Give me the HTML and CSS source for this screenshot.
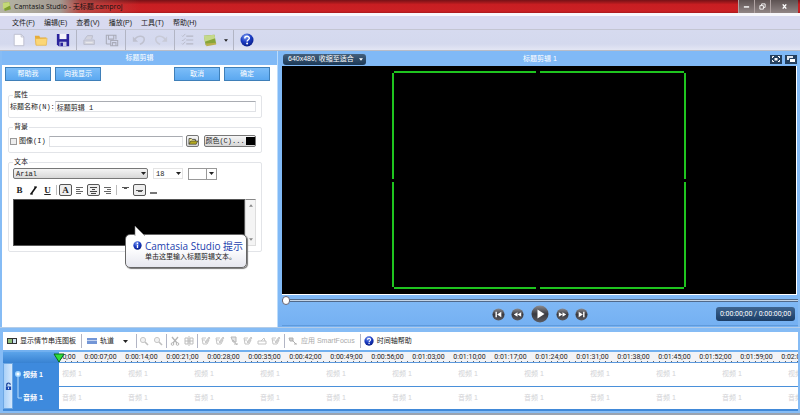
FILE: index.html
```
<!DOCTYPE html>
<html lang="zh-CN">

<head>
    <meta charset="UTF-8">
    <title>Camtasia Studio - 无标题.camproj</title>
    <link rel="stylesheet" href="styles.css">
</head>

<body>
    <svg class="sprite" aria-hidden="true">
        <defs>
            <radialGradient id="blue-ball" cx="40%" cy="25%" r="80%">
                <stop offset="0" stop-color="#7d9cf0" />
                <stop offset="0.5" stop-color="#1b3cc4" />
                <stop offset="1" stop-color="#061a80" />
            </radialGradient>
            <linearGradient id="dark-ball" x1="0" y1="0" x2="0" y2="1">
                <stop offset="0" stop-color="#8c8c90" />
                <stop offset="0.5" stop-color="#3a3a40" />
                <stop offset="1" stop-color="#5c5c62" />
            </linearGradient>
        </defs>
        <symbol id="help" viewBox="0 0 14 14">
            <circle cx="7" cy="7" r="6.5" fill="url(#blue-ball)" />
            <path d="M4.8 5.4C4.8 2.6 9.3 2.7 9.3 5.2C9.3 6.8 7.1 6.7 7.1 8.6" fill="none" stroke="#fff" stroke-width="1.5" />
            <circle cx="7.1" cy="10.6" r="1" fill="#fff" />
        </symbol>
        <symbol id="pen" viewBox="0 0 10 10">
            <path d="M1 2h4M1 4h3M1 2l1 6h4l2-4" fill="none" stroke="#c4c4c4" />
            <path d="M4 6l4-5 1 1-4 5z" fill="#d4d4d4" stroke="#b4b4b4" stroke-width=".6" />
        </symbol>
        <symbol id="magnify" viewBox="0 0 10 10">
            <circle cx="4" cy="4" r="2.6" fill="#f2f2f2" stroke="#c8c8c8" />
            <path d="M6 6l3 3" stroke="#c0c0c0" stroke-width="1.6" />
        </symbol>
        <symbol id="arrow" viewBox="0 0 5 3">
            <path d="M0 0h5L2.500 3z" fill="currentColor" />
        </symbol>
    </svg>

    <header class="title-bar">
        <svg class="app-icon" viewBox="0 0 10 10"><path d="M1 1l7-1 2 8-7 2z" fill="#7fa02e" /><path d="M1 1l7-1 1 4-8 4z" fill="#c3d877" /></svg>
        <span class="title">Camtasia Studio - 无标题.camproj</span>
        <div class="window-buttons">
            <button aria-label="最小化"><svg viewBox="0 0 8 8"><path d="M1 4.500h6" stroke="#fff" stroke-width="1.600" /></svg></button>
            <button aria-label="还原"><svg viewBox="0 0 8 8"><path d="M1 3h4v4H1zM3 3V1h4v4H5" fill="none" stroke="#fff" /></svg></button>
            <button class="close" aria-label="关闭"><svg viewBox="0 0 8 8"><path d="M2 1.500l4 5M6 1.500l-4 5" stroke="#fff" stroke-width="1.600" /></svg></button>
        </div>
    </header>

    <nav class="menu">
        <button>文件(F)</button>
        <button>编辑(E)</button>
        <button>查看(V)</button>
        <button>播放(P)</button>
        <button>工具(T)</button>
        <button>帮助(H)</button>
    </nav>

    <div class="toolbar">
        <button aria-label="新建"><svg viewBox="0 0 16 16"><path d="M2.500 1.500h8l3 3v10h-11z" fill="#fdfdff" stroke="#b9bccb" /><path d="M10.500 1.500v3h3" fill="none" stroke="#b9bccb" /></svg></button>
        <button aria-label="打开"><svg viewBox="0 0 16 16"><path d="M1 3h5l1 2h7v9H2z" fill="#e6ac3a" /><path d="M1.500 6.500L15 6l-1 8H2.500z" fill="#fbd677" stroke="#e4b044" stroke-width=".6" /></svg></button>
        <button aria-label="保存"><svg viewBox="0 0 16 16"><path d="M1 1h14v14H3l-2-2z" fill="#2a239c" /><path d="M4 1h8v6H4z" fill="#f4f4fb" /><path d="M4 10h8v5H4z" fill="#c9cce8" /><path d="M5 11h3v4H5z" fill="#2a239c" /></svg></button>
        <span class="sep"></span>
        <button disabled aria-label="导入"><svg viewBox="0 0 16 16"><path d="M2 7l3-4h6l-1 4M1 8h12v5H1z" fill="#d3d4df" stroke="#b7b9c8" /><path d="M3 11h8" stroke="#eee" /></svg></button>
        <button disabled aria-label="生成"><svg viewBox="0 0 16 16"><path d="M1.500 12.500v-10h11v5M4 3v4h6V3M1.500 12.500H6M6.500 8.500h8v6h-8zM8.500 14v-3h4v3" fill="none" stroke="#a9abb8" stroke-width="1.200" /></svg></button>
        <span class="sep"></span>
        <button disabled aria-label="撤消"><svg viewBox="0 0 16 16"><path d="M3 8c2-5 11-6 11-1 0 3-3 5-5 6" fill="none" stroke="#bfc1cf" stroke-width="1.800" /><path d="M1 4v6h6z" fill="#bfc1cf" /></svg></button>
        <button disabled aria-label="重做"><svg viewBox="0 0 16 16"><path d="M13 8C11 3 2 2 2 7c0 3 3 5 5 6" fill="none" stroke="#c8cad7" stroke-width="1.800" /><path d="M15 4v6H9z" fill="#c8cad7" /></svg></button>
        <span class="sep"></span>
        <button disabled aria-label="任务列表"><svg viewBox="0 0 16 16"><path d="M6 3.500h8M6 8h8M6 12.500h8" stroke="#b5b7c5" stroke-width="1.300" /><path d="M1 3l1 1 3-3M1 8l1 1 3-3M1 12l1 1 3-3" fill="none" stroke="#b5b7c5" /></svg></button>
        <button aria-label="启动工具"><svg viewBox="0 0 16 16"><path d="M1 3l12-1 2 10-12 2z" fill="#86a53a" /><path d="M1 3l12-1 1 4L2 10z" fill="#c5d98a" /><path d="M3 12l12-1v2L4 15z" fill="#b9b04e" /></svg></button>
        <button class="drop" aria-label="更多"><svg><use href="#arrow" /></svg></button>
        <span class="sep"></span>
        <button aria-label="帮助"><svg><use href="#help" /></svg></button>
    </div>

    <main class="workspace">
        <section class="editor">
            <h2 class="bar">标题剪辑</h2>
            <form class="clip-form">
                <div class="actions">
                    <button type="button">帮助我</button>
                    <button type="button">向我显示</button>
                    <button type="button" class="push">取消</button>
                    <button type="button">确定</button>
                </div>
                <fieldset>
                    <legend>属性</legend>
                    <div class="row">
                        <label for="clip-name">标题名称(N):</label>
                        <input class="field" id="clip-name" type="text" value="标题剪辑 1">
                    </div>
                </fieldset>
                <fieldset>
                    <legend>背景</legend>
                    <div class="row background-row">
                        <label class="check"><input type="checkbox">图像(I)</label>
                        <input class="field" type="text" aria-label="图像路径">
                        <button type="button" class="win-button browse" aria-label="浏览"><svg viewBox="0 0 12 10"><path d="M1 9V2h3l1 1h4v2" fill="#fbf39a" stroke="#333" /><path d="M1 9l2-4h9l-2 4z" fill="#b5aa1e" stroke="#333" stroke-width=".8" /></svg></button>
                        <button type="button" class="win-button color">颜色(C)...<span class="swatch"></span></button>
                    </div>
                </fieldset>
                <fieldset>
                    <legend>文本</legend>
                    <div class="row font-row">
                        <span class="picker font-name"><select aria-label="字体"><option>Arial</option></select><svg><use href="#arrow" /></svg></span>
                        <span class="picker font-size"><select aria-label="字号"><option>18</option></select><svg><use href="#arrow" /></svg></span>
                        <button type="button" class="text-color" aria-label="文本颜色"><span></span><svg><use href="#arrow" /></svg></button>
                    </div>
                    <div class="row format-row">
                        <button type="button"><b>B</b></button>
                        <button type="button" aria-label="斜体"><svg viewBox="0 0 9 9"><path d="M7 1L2 8" stroke="#111" stroke-width="1.600" /><path d="M5 1h3M1 8h3" stroke="#111" /></svg></button>
                        <button type="button"><u>U</u></button>
                        <span class="thin-sep"></span>
                        <button type="button" class="on"><b>A</b></button>
                        <button type="button" aria-label="左对齐"><svg viewBox="0 0 9 9"><path d="M1 1.500h7M1 3.500h4M1 5.500h7M1 7.500h5" stroke="#666" /></svg></button>
                        <button type="button" class="on" aria-label="居中"><svg viewBox="0 0 9 9"><path d="M1 1.500h7M3 3.500h3M1 5.500h7M2 7.500h5" stroke="#444" /></svg></button>
                        <button type="button" aria-label="右对齐"><svg viewBox="0 0 9 9"><path d="M1 1.500h7M4 3.500h4M1 5.500h7M3 7.500h5" stroke="#666" /></svg></button>
                        <span class="thin-sep"></span>
                        <button type="button" aria-label="顶部"><svg viewBox="0 0 9 9"><path d="M1 1.500h7M3 2.500h3" stroke="#555" /></svg></button>
                        <button type="button" class="on" aria-label="中部"><svg viewBox="0 0 9 9"><path d="M1 4.500h7M3 5.500h4" stroke="#555" /></svg></button>
                        <button type="button" aria-label="底部"><svg viewBox="0 0 9 9"><path d="M1 7h7" stroke="#777" stroke-width="2" /></svg></button>
                    </div>
                    <div class="text-box">
                        <textarea aria-label="标题文本"></textarea>
                        <div class="scroll"><svg class="up"><use href="#arrow" /></svg><svg><use href="#arrow" /></svg></div>
                        <div class="tip" role="tooltip">
                            <svg class="tip-arrow" viewBox="0 0 12 11"><path d="M1 11V1l10 10" fill="#fff" stroke="#777" stroke-width=".6" /></svg>
                            <svg class="info" viewBox="0 0 10 10"><circle cx="5" cy="5" r="4.600" fill="url(#blue-ball)" /><path d="M5 4.200v3.600M5 1.800v1.400" stroke="#fff" stroke-width="1.500" /></svg>
                            <div>
                                <strong>Camtasia Studio 提示</strong>
                                <p>单击这里输入标题剪辑文本。</p>
                            </div>
                        </div>
                    </div>
                </fieldset>
            </form>
        </section>

        <section class="preview">
            <div class="preview-bar">
                <button class="zoom">640x480, 收缩至适合<svg><use href="#arrow" /></svg></button>
                <h2>标题剪辑 1</h2>
                <div class="view-buttons">
                    <button aria-label="全屏"><svg viewBox="0 0 12 8"><path d="M4.500 3h3v2.500h-3z" fill="#fff" /><path d="M2.500 3V1.500H4M9.500 3V1.500H8M2.500 5v1.500H4M9.500 5v1.500H8" fill="none" stroke="#fff" /></svg></button>
                    <button aria-label="分离"><svg viewBox="0 0 12 8"><path d="M2 1h6v4H2z" fill="#dfe6ee" /><path d="M4.500 3.500h6v4h-6z" fill="#fff" stroke="#24405f" /></svg></button>
                </div>
            </div>
            <div class="screen">
                <svg viewBox="0 0 296 220" fill="none" stroke="#1fc41f" stroke-width="2">
                    <path d="M3 2h142M149 2h144M3 218h142M149 218h144M2 3v106M2 112v105M294 3v106M294 112v105" />
                </svg>
            </div>
            <input class="seek" type="range" min="0" max="100" value="0" aria-label="播放位置">
            <div class="player">
                <div class="play-buttons">
                    <button aria-label="开头"><svg viewBox="0 0 14 14"><circle cx="7" cy="7" r="6.500" fill="url(#dark-ball)" /><path d="M10 4v6L5.500 7z" fill="#fff" /><path d="M4.500 4v6" stroke="#fff" stroke-width="1.500" /></svg></button>
                    <button aria-label="后退"><svg viewBox="0 0 14 14"><circle cx="7" cy="7" r="6.500" fill="url(#dark-ball)" /><path d="M7 4.500v5L3 7zM11 4.500v5L7 7z" fill="#fff" /></svg></button>
                    <button class="play" aria-label="播放"><svg viewBox="0 0 18 18"><circle cx="9" cy="9" r="8.500" fill="url(#dark-ball)" /><path d="M6.500 4.500v9l7-4.500z" fill="#fff" /></svg></button>
                    <button aria-label="前进"><svg viewBox="0 0 14 14"><circle cx="7" cy="7" r="6.500" fill="url(#dark-ball)" /><path d="M3 4.500v5L7 7zM7 4.500v5L11 7z" fill="#fff" /></svg></button>
                    <button aria-label="结尾"><svg viewBox="0 0 14 14"><circle cx="7" cy="7" r="6.500" fill="url(#dark-ball)" /><path d="M4 4v6L8.500 7z" fill="#fff" /><path d="M9.500 4v6" stroke="#fff" stroke-width="1.500" /></svg></button>
                </div>
                <output class="time">0:00:00;00 / 0:00:00;00</output>
            </div>
        </section>
    </main>

    <section class="timeline">
        <div class="timeline-bar">
            <button><svg viewBox="0 0 10 8"><path d="M0 1h10v6H0z" fill="#333" /><path d="M1 2h4v4H1z" fill="#8fbf7a" /><path d="M6 2h3v4H6z" fill="#cfe3f5" /></svg>显示情节串连图板</button>
            <span class="sep"></span>
            <button class="tracks"><svg viewBox="0 0 10 8"><path d="M0 1h10v2H0zM0 4h10v3H0z" fill="#7396d6" /><path d="M0 3.500h10" stroke="#c3d3f0" /></svg>轨道<svg class="caret"><use href="#arrow" /></svg></button>
            <span class="sep before-tools"></span>
            <button class="tool" disabled aria-label="放大"><svg><use href="#magnify" /></svg></button>
            <button class="tool" disabled aria-label="缩小"><svg><use href="#magnify" /></svg></button>
            <span class="sep"></span>
            <button class="tool" disabled aria-label="剪切"><svg viewBox="0 0 10 10"><path d="M2 1l5 6M8 1L3 7" stroke="#b4b4b4" stroke-width="1.300" /><circle cx="2.500" cy="8" r="1.300" fill="none" stroke="#b4b4b4" /><circle cx="7.500" cy="8" r="1.300" fill="none" stroke="#b4b4b4" /></svg></button>
            <button class="tool" disabled aria-label="分割"><svg viewBox="0 0 10 10"><path d="M1 2h3v6H1zM6 2h3v6H6zM5 0v10M1 5h8" fill="none" stroke="#bcbcbc" /></svg></button>
            <span class="sep"></span>
            <button class="tool" disabled aria-label="标题剪辑"><svg><use href="#pen" /></svg></button>
            <button class="tool" disabled aria-label="缩放"><svg><use href="#pen" /></svg></button>
            <button class="tool" disabled aria-label="标注"><svg viewBox="0 0 10 10"><path d="M2 1h5v5H4zM4 4l4 5M5 8h4" fill="#e4e4e4" stroke="#b8b8b8" /></svg></button>
            <button class="tool" disabled aria-label="转场"><svg><use href="#pen" /></svg></button>
            <button class="tool" disabled aria-label="音频"><svg viewBox="0 0 10 10"><path d="M1 5h8v3H1zM4 5l3-3 1 3" fill="none" stroke="#c4c4c4" /></svg></button>
            <button class="tool" disabled aria-label="画中画"><svg><use href="#pen" /></svg></button>
            <span class="sep"></span>
            <button class="smart" disabled><svg viewBox="0 0 10 10"><path d="M1 2h4v3H2zM4 4l4 4M6 8h3" fill="#ccc" stroke="#b0b0b0" /></svg>应用 SmartFocus</button>
            <span class="sep after-smart"></span>
            <button><svg><use href="#help" /></svg>时间轴帮助</button>
        </div>
        <div class="ruler">
            <div class="ruler-head">
                <svg class="playhead" viewBox="0 0 12 10"><path d="M1 1h10L6 9z" fill="#2fe03a" stroke="#0a6a1c" /></svg>
            </div>
            <div class="ruler-scale" id="scale"></div>
        </div>
        <div class="tracks-area">
            <button class="lock" aria-label="锁定"><svg viewBox="0 0 8 10"><path d="M2 5V3a2 2 0 0 1 4 0" fill="none" stroke="#123a94" stroke-width="1.300" /><path d="M1 5h6v4H1z" fill="#1c49b0" /><path d="M4 6v2" stroke="#fff" /></svg></button>
            <div class="track-names">
                <svg class="branch" viewBox="0 0 8 46"><path d="M4 11v24h4" fill="none" stroke="#b7dcfb" /><circle cx="4" cy="11" r="3" fill="#a5d8ff" /><circle cx="4" cy="11" r="1.500" fill="#fff" /></svg>
                <div class="names"><span>视频 1</span><span>音频 1</span></div>
            </div>
            <div class="lanes">
                <div class="lane" data-name="视频 1"></div>
                <div class="lane" data-name="音频 1"></div>
            </div>
        </div>
    </section>
    <script src="script.js"></script>
</body>

</html>
```
FILE: styles.css
```
* {
    box-sizing: border-box;
}

body {
    margin: 0;
    min-height: 100vh;
    display: flex;
    flex-direction: column;
    overflow: hidden;
    background: #86bcf5;
    color: #222;
    font: 7px/10px "Liberation Sans", "Noto Sans CJK SC", sans-serif;
}

button,
input,
select,
textarea {
    margin: 0;
    padding: 0;
    border: 0;
    background: none;
    color: inherit;
    font: inherit;
}

button {
    display: flex;
    align-items: center;
    justify-content: center;
    white-space: nowrap;
}

h2,
p {
    margin: 0;
    font-size: 7px;
    font-weight: normal;
}

svg {
    display: block;
    flex: none;
}

.sprite {
    position: absolute;
    width: 0;
    height: 0;
}

/* title, menu, main toolbar */
.title-bar {
    display: flex;
    align-items: center;
    height: 13px;
    padding: 0 2px;
    gap: 3px;
    background: linear-gradient(90deg, #b5b5a5 0, #a39a92 60px, rgba(180, 100, 90, 0.6) 80px, rgba(200, 30, 30, 0) 140px), linear-gradient(#761116, #c81e22 35%, #cb2024 85%, #a81a1e);
    color: #111;
    font-family: "Open Sans", "Noto Sans CJK SC", sans-serif;
}

.app-icon {
    width: 9px;
    height: 9px;
}

.window-buttons {
    display: flex;
    align-self: stretch;
    margin-left: auto;
    background: linear-gradient(#5d5252, #918686);
}

.window-buttons button {
    width: 16px;
    border-left: 1px solid #b0a3a3;
}

.window-buttons .close {
    width: 28px;
}

.window-buttons svg {
    width: 7px;
    height: 7px;
}

.menu {
    display: flex;
    gap: 9px;
    padding: 2px 12px 1px;
    border-top: 3px solid #f7f7fc;
    background: #d8daf0;
}

.toolbar {
    display: flex;
    align-items: center;
    height: 21px;
    padding-left: 8px;
    border-top: 1px solid #c3c5d2;
    background: linear-gradient(#d6daef, #d4d9ee 70%, #e3e6f4);
}

.toolbar button {
    width: 22px;
    height: 20px;
}

.toolbar svg {
    width: 14px;
    height: 14px;
}

.toolbar .drop {
    width: 10px;
}

.toolbar .drop svg {
    width: 4px;
    height: 3px;
}

.sep {
    flex: none;
    width: 1px;
    margin: 0 2px;
    align-self: stretch;
    background: #b2b5c4;
}

/* title clip editor */
.workspace {
    flex: 1;
    display: grid;
    grid-template-columns: 276px 1fr;
    padding: 0 2px;
    border-top: 1px solid #b9bcc6;
}

.editor {
    background: #fff;
    border-right: 1px solid #bcdcfb;
}

.bar {
    line-height: 14px;
    background: #80b9f6;
    color: #fff;
    text-align: center;
}

.clip-form {
    display: flex;
    flex-direction: column;
    gap: 4px;
    padding: 2px 15px 0 6px;
}

.actions {
    display: flex;
    gap: 4px;
    margin: 0 -8px 5px -3px;
}

.actions button {
    width: 46px;
    height: 14px;
    border: 1px solid #3f7fb8;
    background: linear-gradient(#7cbdf8, #5ba8f0);
    color: #fff;
}

.actions .push {
    margin-left: auto;
}

fieldset {
    min-width: 0;
    margin: 0;
    padding: 1px 5px 5px 4px;
    border: 1px solid #e2e4e8;
    border-radius: 2px;
}

legend {
    padding: 0 1px;
}

.row {
    display: flex;
    align-items: center;
    font-family: "Liberation Mono", "Noto Sans CJK SC", monospace;
}

.row label {
    flex: none;
    margin-left: -3px;
}

.field {
    flex: 1;
    min-width: 0;
    height: 11px;
    padding: 0 1px;
    border: 1px solid #e0e2e6;
    border-top-color: #a9acb2;
}

.background-row {
    gap: 3px;
    margin-top: 2px;
}

.check {
    display: flex;
    align-items: center;
    gap: 2px;
}

.check input {
    appearance: none;
    width: 7px;
    height: 7px;
    border: 1px solid #9a9a9a;
    background: #eee;
}

.win-button {
    height: 12px;
    border: 1px solid #777;
    border-radius: 2px;
    background: linear-gradient(#f6f6f6, #d6d6d6);
}

.browse {
    width: 13px;
}

.browse svg {
    width: 10px;
    height: 8px;
}

.color {
    gap: 1px;
    width: 52px;
    margin-left: 2px;
}

.swatch {
    width: 9px;
    height: 8px;
    background: #000;
}

.font-row {
    gap: 5px;
    height: 11px;
}

.picker {
    display: grid;
    align-items: center;
}

.picker > * {
    grid-area: 1 / 1;
}

.picker select {
    appearance: none;
    height: 11px;
    padding: 0 2px;
    border: 1px solid #e4e4e4;
}

.picker svg,
.text-color svg {
    width: 5px;
    height: 3px;
    margin: 0 2px;
    justify-self: end;
    pointer-events: none;
}

.font-name {
    width: 135px;
}

.font-name select {
    border-color: #777;
    border-radius: 2px;
    background: linear-gradient(#f4f4f4, #d8d8d8);
}

.font-size {
    width: 30px;
}

.text-color {
    border: 1px solid #999;
    height: 12px;
}

.text-color span {
    width: 18px;
    height: 10px;
    border-right: 1px solid #999;
}

.format-row {
    gap: 1px;
    height: 12px;
    margin: 5px 0 3px;
    font: 9px/10px "Liberation Serif", serif;
}

.format-row button {
    width: 13px;
    height: 12px;
    border: 1px solid transparent;
    border-radius: 2px;
}

.format-row u {
    font-weight: bold;
}

.format-row .on {
    border-color: #555;
    background: #eee;
}

.format-row svg {
    width: 9px;
    height: 9px;
}

.thin-sep {
    width: 1px;
    height: 10px;
    margin: 0 1px;
    background: #bbb;
}

.text-box {
    position: relative;
    display: flex;
}

textarea {
    flex: 1;
    height: 47px;
    resize: none;
    border: 1px solid #555;
    background: #000;
    color: #fff;
}

.scroll {
    display: flex;
    flex-direction: column;
    justify-content: space-between;
    align-items: center;
    width: 11px;
    padding: 4px 0;
    border: 1px solid #ddd;
    border-top-color: #888;
    background: #f4f4f4;
    color: #888;
}

.scroll svg {
    width: 4px;
    height: 3px;
}

.scroll .up {
    transform: rotate(180deg);
}

.tip {
    position: absolute;
    top: 35px;
    right: 9px;
    display: flex;
    gap: 3px;
    width: 122px;
    padding: 6px 7px 5px;
    border: 1px solid #666;
    border-radius: 5px;
    background: linear-gradient(#fff 40%, #e6e7ef);
    box-shadow: 1px 1px 1px #777;
    white-space: nowrap;
}

.tip-arrow {
    position: absolute;
    left: 8px;
    top: -10px;
    width: 12px;
    height: 11px;
}

.tip .info {
    width: 9px;
    height: 9px;
}

.tip strong {
    display: block;
    color: #1c3fae;
    font: 10px/11px "Open Sans", "Noto Sans CJK SC", sans-serif;
}

/* preview */
.preview {
    display: flex;
    flex-direction: column;
    padding-left: 4px;
    background: linear-gradient(#80b9f6 90%, #74b0f2);
}

.preview-bar {
    display: grid;
    grid-template-columns: 1fr auto 1fr;
    align-items: center;
    height: 15px;
    padding: 1px 1px 0;
    color: #fff;
}

.zoom {
    justify-self: start;
    gap: 5px;
    height: 11px;
    padding: 0 3px 0 5px;
    border-radius: 3px;
    background: linear-gradient(#44607c, #1b3856);
}

.zoom svg {
    width: 4px;
    height: 3px;
}

.view-buttons {
    display: flex;
    gap: 3px;
    justify-self: end;
}

.view-buttons button {
    width: 12px;
    height: 9px;
    background: #24405f;
}

.view-buttons svg {
    width: 12px;
    height: 8px;
}

.screen {
    flex: 1;
    display: flex;
    align-items: center;
    justify-content: center;
    margin-right: 1px;
    padding: 4px 0;
    border: solid #fff;
    border-width: 0 1px 1px 0;
    background: #000;
}

.screen svg {
    width: 296px;
    height: 220px;
}

.seek {
    appearance: none;
    width: 100%;
    height: 10px;
}

.seek::-webkit-slider-runnable-track {
    height: 3px;
    border-top: 1px solid #50698a;
    border-bottom: 1px solid #50698a;
    background: #c4d4e6;
}

.seek::-webkit-slider-thumb {
    appearance: none;
    width: 8px;
    height: 9px;
    margin-top: -4px;
    border: 1px solid #667;
    border-radius: 4px;
    background: #fff;
}

.player {
    display: grid;
    grid-template-columns: 1fr auto 1fr;
    align-items: center;
    height: 21px;
    margin-bottom: 1px;
    padding-bottom: 2px;
    border-bottom: 1px solid #5f9bdc;
}

.play-buttons {
    display: flex;
    align-items: center;
    gap: 6px;
    grid-column: 2;
}

.play-buttons .play {
    margin: 0 1px;
}

.play-buttons svg {
    width: 13px;
    height: 13px;
}

.play-buttons .play svg {
    width: 18px;
    height: 18px;
}

.time {
    justify-self: end;
    width: 79px;
    margin-right: 3px;
    border-radius: 3px;
    background: linear-gradient(#3f6590, #1b3d66);
    color: #fff;
    font: 7px/14px Roboto, sans-serif;
    text-align: center;
    white-space: nowrap;
}

/* timeline */
.timeline {
    padding: 4px 2px 2px 3px;
    border-top: 1px solid #b4cde8;
    border-bottom: 2px solid #9aa3b0;
}

.timeline-bar {
    display: flex;
    height: 18px;
    padding: 0 4px;
    background: #fff;
}

.timeline-bar .sep {
    margin: 2px 5px;
}

.timeline-bar svg {
    width: 10px;
    height: 10px;
}

.timeline-bar button {
    gap: 3px;
}

.timeline-bar .before-tools {
    margin-right: 0;
}

.timeline-bar .tool {
    width: 14px;
}

.timeline-bar .tool + .sep {
    margin: 2px 1px;
}

.timeline-bar .caret {
    width: 5px;
    height: 3px;
    margin: 0 3px 0 6px;
}

.timeline-bar .smart {
    padding-left: 2px;
    color: #aaa;
}

.timeline-bar .after-smart {
    margin-right: 3px;
}

.ruler {
    display: flex;
    height: 13px;
    border-top: 2px solid #72b0ef;
}

.ruler-head {
    position: relative;
    flex: none;
    width: 56px;
    background: linear-gradient(#5ba4ea, #3882d2);
}

.playhead {
    position: absolute;
    right: -6px;
    top: 1px;
    z-index: 1;
    width: 12px;
    height: 10px;
}

.ruler-scale {
    display: flex;
    flex: 1;
    min-width: 0;
    overflow: hidden;
    border-bottom: 1px solid #5b98dc;
    background: repeating-linear-gradient(90deg, #666 0, #666 1px, transparent 1px, transparent 6px) bottom / 100% 1px no-repeat, #f2f3f6;
    font: 7px/10px Roboto, sans-serif;
}

.ruler-scale span {
    flex: none;
    width: 41px;
    margin-left: -20px;
    margin-right: 20px;
    text-align: center;
}

.tracks-area {
    display: flex;
    border-bottom: 2px solid #4189d8;
}

.lock {
    width: 10px;
    border: 1px solid #6ea8e4;
    background: linear-gradient(90deg, #a9d0f8, #d5e8fc);
}

.lock svg {
    width: 7px;
    height: 9px;
}

.track-names {
    display: flex;
    gap: 1px;
    width: 46px;
    padding-left: 1px;
    background: #3e8add;
    color: #fff;
    font-weight: bold;
}

.branch {
    width: 8px;
    height: 46px;
}

.names span {
    display: block;
    line-height: 23px;
}

.lanes {
    flex: 1;
    min-width: 0;
    background: #fff;
}

.lane {
    display: flex;
    overflow: hidden;
    height: 23px;
    padding-left: 3px;
    color: #d2d2d6;
    line-height: 22px;
}

.lane + .lane {
    border-top: 1px solid #4a90da;
}

.lane span {
    flex: none;
    width: 66px;
}
```
FILE: script.js
```
var scale = document.getElementById('scale');

function pad(n) {
    return (n < 10 ? '0' : '') + n;
}

// one mark every seven seconds
for (var s = 0; s <= 126; s += 7) {
    var mark = document.createElement('span');
    mark.textContent = '0:' + pad(Math.floor(s / 60)) + ':' + pad(s % 60) + ';00';
    scale.appendChild(mark);
}

document.querySelectorAll('.lane').forEach(function(lane) {
    for (var i = 0; i < 12; i++) {
        var name = document.createElement('span');
        name.textContent = lane.dataset.name;
        lane.appendChild(name);
    }
});
```
